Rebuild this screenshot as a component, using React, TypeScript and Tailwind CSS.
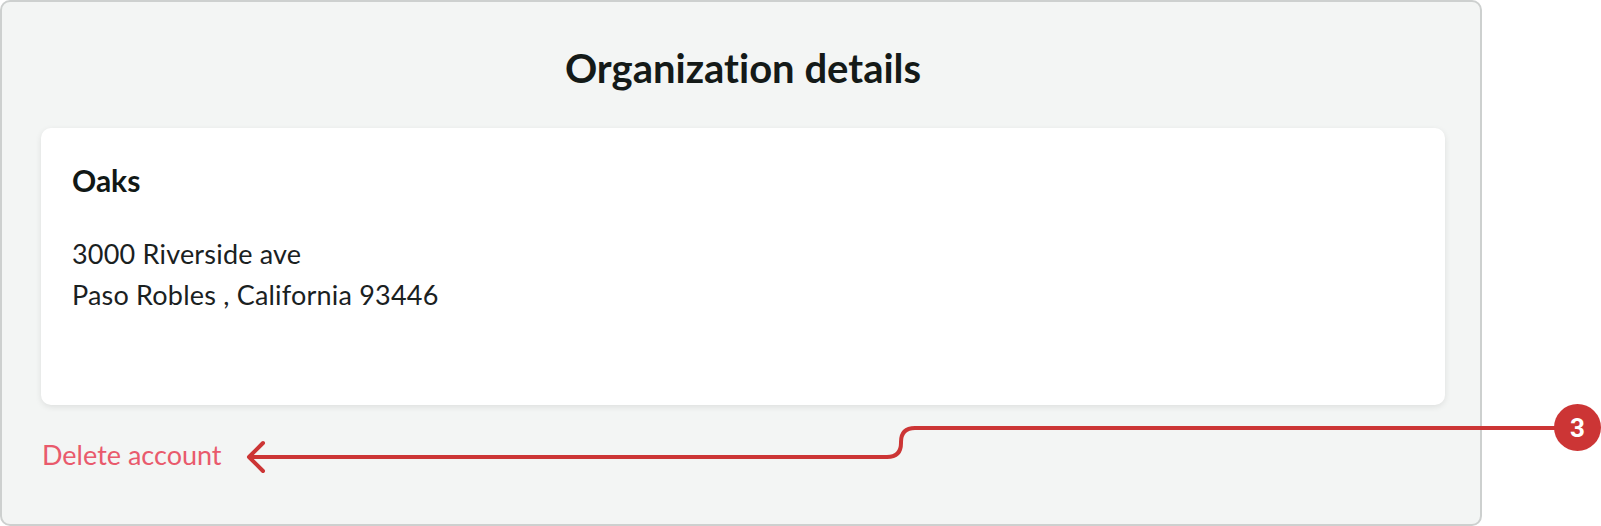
import React from "react";

export default function App() {
  return (
    <div className="relative w-[1601px] h-[526px] bg-white font-['Lato',_'Liberation_Sans',_sans-serif] [font-variant-ligatures:none]">
      <div className="w-[1482px] h-[526px] rounded-[10px] border-2 border-[#cdd0cf] bg-[#f3f5f4] pt-[42px] pl-[39px] pr-[35px] flex flex-col">
        <h1 className="text-center text-[40px] leading-[48px] font-bold text-[#141a18]">
          Organization details
        </h1>
        <div className="mt-[36px] h-[277px] rounded-[10px] bg-white shadow-[0_2px_6px_rgba(0,0,0,0.09)] pt-[34px] pl-[31px]">
          <div className="text-[30px] leading-[36px] font-bold text-[#111816]">Oaks</div>
          <div className="mt-[35px] text-[27px] leading-[41px] text-[#1a211f] tracking-[0.2px]">
            <div>3000 Riverside ave</div>
            <div>Paso Robles , California 93446</div>
          </div>
        </div>
        <div className="mt-[29px] pl-[1px]">
          <span className="text-[27px] leading-[41px] text-[#e95a6c]">Delete account</span>
        </div>
      </div>

      <svg
        className="pointer-events-none absolute inset-0"
        width="1601"
        height="526"
        viewBox="0 0 1601 526"
        fill="none"
      >
        <path
          d="M250 457 H887 Q901 457 901 443 V442 Q901 428 915 428 H1560"
          stroke="#cc3535"
          strokeWidth="4"
          strokeLinejoin="round"
        />
        <path
          d="M263 443 L249 457 L263 471"
          stroke="#cc3535"
          strokeWidth="4"
          strokeLinecap="round"
          strokeLinejoin="round"
        />
      </svg>

      <div className="absolute left-[1554px] top-[404px] w-[47px] h-[47px] rounded-full bg-[#cc3535] flex items-center justify-center">
        <span className="text-white text-[26px] leading-none font-bold font-['Roboto',_'Liberation_Sans',_sans-serif]">3</span>
      </div>
    </div>
  );
}
